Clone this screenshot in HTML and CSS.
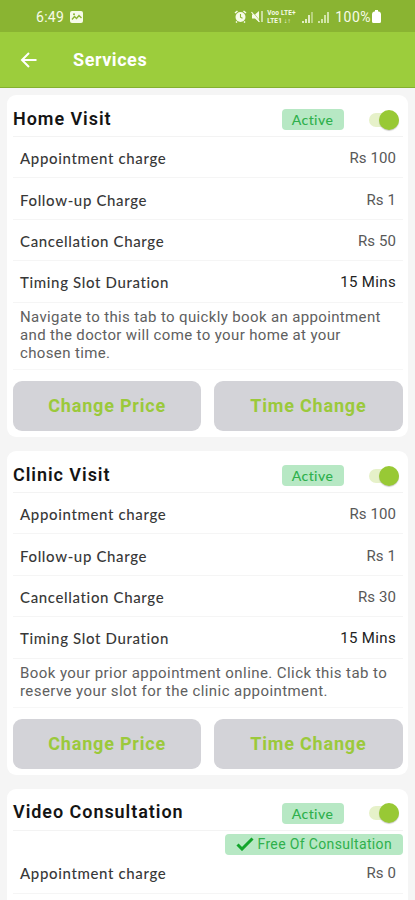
FILE: index.html
```html
<!DOCTYPE html>
<html lang="en">
<head>
<meta charset="utf-8">
<title>Services</title>
<link rel="stylesheet" href="styles.css">
</head>
<body>
<div class="status">
  <span class="clock">6:49</span>
  <svg class="photo" width="13" height="12" viewBox="0 0 13 12"><rect width="13" height="12" rx="2" fill="#f7fbe9"/><path d="M2 8.5 4.5 5.5 6.5 7.5 9 4.5 11.5 7" fill="none" stroke="#8db535" stroke-width="1.4"/><circle cx="4" cy="3.2" r="1" fill="#8db535"/></svg>
  <div class="tray">
    <svg width="13" height="13" viewBox="0 0 13 13"><path d="M1 3 3.5 1M12 3 9.500 1M3 11.500 2 12.500M10 11.500 11 12.500" stroke="#f7fbe9" stroke-width="1.600"/><circle cx="6.500" cy="7" r="5" fill="#f7fbe9"/><path d="M6.500 4v3.200l2 1" fill="none" stroke="#8db535" stroke-width="1.100"/></svg>
    <svg class="mute" width="13" height="13" viewBox="0 0 13 13"><path d="M1 4.500h3L8 1v11L4 8.500H1z" fill="#f7fbe9"/><path d="M1 1 9 11" stroke="#8db535" stroke-width=".6"/><path d="M.5 2 8.500 12M11 1v11" stroke="#f7fbe9" stroke-width="1.200"/></svg>
    <span class="volte"><span>Voo LTE+</span><span>LTE1 ↓↑</span></span>
    <svg class="signal" width="12" height="12" viewBox="0 0 12 12"><path d="M1 12v-2M4 12V8M7 12V4" stroke="#f7fbe9" stroke-width="1.600"/><path d="M10 12V1" stroke="#c4da91" stroke-width="1.600"/></svg>
    <svg class="signal" width="12" height="12" viewBox="0 0 12 12"><path d="M1 12v-2M4 12V8M7 12V4M10 12V1" stroke="#e9f3cf" stroke-width="1.500"/></svg>
    <span class="percent">100%</span>
    <svg width="9" height="13" viewBox="0 0 9 13"><path d="M3 0h3v1.500h1Q9 2 9 4v7.500Q9 13 7.500 13h-6Q0 13 0 11.500V4Q0 2 2 1.500h1z" fill="#fff"/></svg>
  </div>
</div>
<header class="appbar">
  <svg width="18" height="18" viewBox="0 0 18 18"><path d="M16.500 9H2M9 2 2 9 9 16" fill="none" stroke="#fff" stroke-width="2"/></svg>
  <h1>Services</h1>
</header>
<main>
  <section class="card">
    <div class="head"><h2>Home Visit</h2><span class="active">Active</span><span class="switch"></span></div>
    <div class="row"><span class="label">Appointment charge</span><span class="price">Rs 100</span></div>
    <div class="row"><span class="label">Follow-up Charge</span><span class="price">Rs 1</span></div>
    <div class="row"><span class="label">Cancellation Charge</span><span class="price">Rs 50</span></div>
    <div class="row"><span class="label">Timing Slot Duration</span><span class="price mins">15 Mins</span></div>
    <p>Navigate to this tab to quickly book an appointment<br>and the doctor will come to your home at your<br>chosen time.</p>
    <div class="actions"><button>Change Price</button><button>Time Change</button></div>
  </section>
  <section class="card">
    <div class="head"><h2>Clinic Visit</h2><span class="active">Active</span><span class="switch"></span></div>
    <div class="row"><span class="label">Appointment charge</span><span class="price">Rs 100</span></div>
    <div class="row"><span class="label">Follow-up Charge</span><span class="price">Rs 1</span></div>
    <div class="row"><span class="label">Cancellation Charge</span><span class="price">Rs 30</span></div>
    <div class="row"><span class="label">Timing Slot Duration</span><span class="price mins">15 Mins</span></div>
    <p class="wide">Book your prior appointment online. Click this tab to<br>reserve your slot for the clinic appointment.</p>
    <div class="actions"><button>Change Price</button><button>Time Change</button></div>
  </section>
  <section class="card">
    <div class="head"><h2>Video Consultation</h2><span class="active">Active</span><span class="switch"></span></div>
    <div class="free"><svg width="18" height="14" viewBox="0 0 18 14"><path d="M1.500 7.500 6 12 16.500 1.500" fill="none" stroke="#12a52b" stroke-width="3"/></svg><span>Free Of Consultation</span></div>
    <div class="row after-free"><span class="label">Appointment charge</span><span class="price">Rs 0</span></div>
  </section>
</main>
</body>
</html>
```

FILE: styles.css
```css
* { box-sizing: border-box; }
body { margin: 0; height: 900px; overflow: hidden; background: #f5f5f5; font-family: Roboto, sans-serif; color: #222; }
h1, h2, p { margin: 0; }
svg { display: block; flex: none; }

.status { height: 32px; background: #8ab432; display: flex; align-items: center; padding: 1px 34px 0 36px; color: #f7fbe9; }
.clock { font-size: 14px; letter-spacing: .3px; width: 34px; }
.tray { margin-left: auto; display: flex; align-items: center; }
.mute { margin-left: 4px; }
.volte { display: flex; flex-direction: column; width: 34px; margin-left: 3px; font-size: 6.500px; line-height: 8px; font-weight: 700; letter-spacing: .2px; white-space: nowrap; }
.signal { margin-left: 1px; margin-right: 3px; }
.percent { font-size: 14px; letter-spacing: .5px; margin: 0 0 0 2px; }
.percent + svg { margin-left: 1px; }
.status .tray { margin-right: 0; }

.appbar { height: 56px; background: #9ccd3c; display: flex; align-items: center; padding-left: 20px; gap: 35px; border-bottom: 1px solid #84b02f; }
.appbar h1 { font-size: 18px; line-height: 22px; font-weight: 700; color: #fff; letter-spacing: .55px; }

main { height: 812px; overflow: hidden; padding: 7px 7px 0; display: flex; flex-direction: column; gap: 14px; }
.card { background: #fff; border-radius: 9px; padding: 0 5.500px 6px 6px; flex: none; }
.card:last-child { flex: 1; border-radius: 9px 9px 0 0; }
.head { height: 42px; display: flex; align-items: center; border-bottom: 1px solid #f3f3f3; padding-top: 8px; }
.head h2 { flex: 1; font-size: 18px; line-height: 22px; font-weight: 600; letter-spacing: .95px; margin-top: -2px; color: #141414; white-space: nowrap; }
.active { width: 62px; height: 21px; border-radius: 4px; background: #b7e8c4; color: #2fb04c; font: 500 14px/21px Lato, sans-serif; letter-spacing: .4px; text-align: center; }
.switch { width: 30px; height: 14px; border-radius: 7px; background: #e6f1c9; margin: 0 4px 0 25px; display: flex; justify-content: flex-end; align-items: center; }
.switch::after { content: ""; width: 20px; height: 20px; border-radius: 50%; background: #98c935; box-shadow: 0 1px 1px #0003; flex: none; }
.row { height: 41.400px; border-bottom: 1px solid #f5f5f5; display: flex; align-items: center; justify-content: space-between; padding: 2px 6.500px 0 7px; }
.label { font: 500 15px/20px Lato, sans-serif; letter-spacing: .64px; color: #383838; }
.price { font: 400 15px/20px Roboto, sans-serif; letter-spacing: .1px; color: #585858; }
.mins { color: #222; letter-spacing: .35px; }
.card p { font-size: 15px; line-height: 18px; letter-spacing: .36px; color: #606060; padding: 5.500px 7px 7px; border-bottom: 1px solid #f7f7f7; white-space: nowrap; }
.card .wide { padding-top: 5px; letter-spacing: .43px; }
.actions { display: grid; grid-template-columns: 1fr 1fr; gap: 13px; padding-top: 11px; }
button { height: 50px; border: 0; border-radius: 9px; background: #d3d3d8; color: #9bc93b; font: 700 18px/22px Roboto, sans-serif; letter-spacing: .8px; padding: 0; }
.free { width: 178px; height: 21px; margin: 3px 0 0 auto; border-radius: 4px; background: #b7e8c4; color: #2fb04c; display: flex; align-items: center; padding-left: 11px; gap: 4px; font: 14px/21px Roboto, sans-serif; letter-spacing: .35px; white-space: nowrap; }
.after-free { height: 39px; padding-top: 0; padding-bottom: 1px; }
```
